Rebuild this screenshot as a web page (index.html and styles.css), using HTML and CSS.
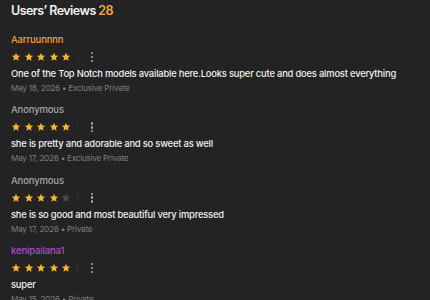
FILE: index.html
```html
<!DOCTYPE html>
<html lang="en">
<head>
    <meta charset="UTF-8">
    <meta name="viewport" content="width=device-width, initial-scale=1.0">
    <title>Users' Reviews</title>
    <link rel="stylesheet" href="styles.css">
</head>
<body>
    <div class="reviews">
        <h2 class="reviews-title">Users’ Reviews <span class="count">28</span></h2>

        <div class="review">
            <div class="review-name">Aarruunnnn</div>
            <div class="review-rating">
                <div class="stars">
                    <svg class="star on" viewBox="0 0 24 24"><path d="M12 2l2.9 6.6 7.1.6-5.4 4.7 1.6 7-6.2-3.7-6.2 3.7 1.6-7L2 9.2l7.1-.6z"/></svg>
                    <svg class="star on" viewBox="0 0 24 24"><path d="M12 2l2.9 6.6 7.1.6-5.4 4.7 1.6 7-6.2-3.7-6.2 3.7 1.6-7L2 9.2l7.1-.6z"/></svg>
                    <svg class="star on" viewBox="0 0 24 24"><path d="M12 2l2.9 6.6 7.1.6-5.4 4.7 1.6 7-6.2-3.7-6.2 3.7 1.6-7L2 9.2l7.1-.6z"/></svg>
                    <svg class="star on" viewBox="0 0 24 24"><path d="M12 2l2.9 6.6 7.1.6-5.4 4.7 1.6 7-6.2-3.7-6.2 3.7 1.6-7L2 9.2l7.1-.6z"/></svg>
                    <svg class="star on" viewBox="0 0 24 24"><path d="M12 2l2.9 6.6 7.1.6-5.4 4.7 1.6 7-6.2-3.7-6.2 3.7 1.6-7L2 9.2l7.1-.6z"/></svg>
                </div>
                <span class="divider"></span>
                <span class="more"><i></i><i></i><i></i></span>
            </div>
            <p class="review-text">One of the Top Notch models available here.Looks super cute and does almost everything</p>
            <div class="review-meta">May 18, 2026 • Exclusive Private</div>
        </div>

        <div class="review">
            <div class="review-name anon">Anonymous</div>
            <div class="review-rating">
                <div class="stars">
                    <svg class="star on" viewBox="0 0 24 24"><path d="M12 2l2.9 6.6 7.1.6-5.4 4.7 1.6 7-6.2-3.7-6.2 3.7 1.6-7L2 9.2l7.1-.6z"/></svg>
                    <svg class="star on" viewBox="0 0 24 24"><path d="M12 2l2.9 6.6 7.1.6-5.4 4.7 1.6 7-6.2-3.7-6.2 3.7 1.6-7L2 9.2l7.1-.6z"/></svg>
                    <svg class="star on" viewBox="0 0 24 24"><path d="M12 2l2.9 6.6 7.1.6-5.4 4.7 1.6 7-6.2-3.7-6.2 3.7 1.6-7L2 9.2l7.1-.6z"/></svg>
                    <svg class="star on" viewBox="0 0 24 24"><path d="M12 2l2.9 6.6 7.1.6-5.4 4.7 1.6 7-6.2-3.7-6.2 3.7 1.6-7L2 9.2l7.1-.6z"/></svg>
                    <svg class="star on" viewBox="0 0 24 24"><path d="M12 2l2.9 6.6 7.1.6-5.4 4.7 1.6 7-6.2-3.7-6.2 3.7 1.6-7L2 9.2l7.1-.6z"/></svg>
                </div>
                <span class="divider"></span>
                <span class="more"><i></i><i></i><i></i></span>
            </div>
            <p class="review-text">she is pretty and adorable and so sweet as well</p>
            <div class="review-meta">May 17, 2026 • Exclusive Private</div>
        </div>

        <div class="review">
            <div class="review-name anon">Anonymous</div>
            <div class="review-rating">
                <div class="stars">
                    <svg class="star on" viewBox="0 0 24 24"><path d="M12 2l2.9 6.6 7.1.6-5.4 4.7 1.6 7-6.2-3.7-6.2 3.7 1.6-7L2 9.2l7.1-.6z"/></svg>
                    <svg class="star on" viewBox="0 0 24 24"><path d="M12 2l2.9 6.6 7.1.6-5.4 4.7 1.6 7-6.2-3.7-6.2 3.7 1.6-7L2 9.2l7.1-.6z"/></svg>
                    <svg class="star on" viewBox="0 0 24 24"><path d="M12 2l2.9 6.6 7.1.6-5.4 4.7 1.6 7-6.2-3.7-6.2 3.7 1.6-7L2 9.2l7.1-.6z"/></svg>
                    <svg class="star on" viewBox="0 0 24 24"><path d="M12 2l2.9 6.6 7.1.6-5.4 4.7 1.6 7-6.2-3.7-6.2 3.7 1.6-7L2 9.2l7.1-.6z"/></svg>
                    <svg class="star" viewBox="0 0 24 24"><path d="M12 2l2.9 6.6 7.1.6-5.4 4.7 1.6 7-6.2-3.7-6.2 3.7 1.6-7L2 9.2l7.1-.6z"/></svg>
                </div>
                <span class="divider"></span>
                <span class="more"><i></i><i></i><i></i></span>
            </div>
            <p class="review-text">she is so good and most beautiful very impressed</p>
            <div class="review-meta">May 17, 2026 • Private</div>
        </div>

        <div class="review">
            <div class="review-name purple">kenipailana1</div>
            <div class="review-rating">
                <div class="stars">
                    <svg class="star on" viewBox="0 0 24 24"><path d="M12 2l2.9 6.6 7.1.6-5.4 4.7 1.6 7-6.2-3.7-6.2 3.7 1.6-7L2 9.2l7.1-.6z"/></svg>
                    <svg class="star on" viewBox="0 0 24 24"><path d="M12 2l2.9 6.6 7.1.6-5.4 4.7 1.6 7-6.2-3.7-6.2 3.7 1.6-7L2 9.2l7.1-.6z"/></svg>
                    <svg class="star on" viewBox="0 0 24 24"><path d="M12 2l2.9 6.6 7.1.6-5.4 4.7 1.6 7-6.2-3.7-6.2 3.7 1.6-7L2 9.2l7.1-.6z"/></svg>
                    <svg class="star on" viewBox="0 0 24 24"><path d="M12 2l2.9 6.6 7.1.6-5.4 4.7 1.6 7-6.2-3.7-6.2 3.7 1.6-7L2 9.2l7.1-.6z"/></svg>
                    <svg class="star on" viewBox="0 0 24 24"><path d="M12 2l2.9 6.6 7.1.6-5.4 4.7 1.6 7-6.2-3.7-6.2 3.7 1.6-7L2 9.2l7.1-.6z"/></svg>
                </div>
                <span class="divider"></span>
                <span class="more"><i></i><i></i><i></i></span>
            </div>
            <p class="review-text">super</p>
            <div class="review-meta">May 15, 2026 • Private</div>
        </div>
    </div>
</body>
</html>
```

FILE: styles.css
```css
body {
    font-family: 'Inter', 'Liberation Sans', sans-serif;
    margin: 0;
    background-color: #232323;
    color: #eeeeee;
}

.reviews {
    padding: 2px 11px 0;
}

.reviews-title {
    margin: 0 0 14px;
    font-size: 12.5px;
    font-weight: 600;
    line-height: 17px;
    letter-spacing: -0.55px;
    color: #f2f2f2;
}

.reviews-title .count {
    color: #f2ad3c;
}

.review {
    margin-bottom: 9.33px;
}

.review-name {
    font-size: 9.5px;
    font-weight: 500;
    line-height: 14px;
    letter-spacing: -0.15px;
    color: #eea23a;
}

.review-name.anon {
    color: #a3a3a3;
}

.review-name.purple {
    color: #b24ad6;
}

.review-rating {
    display: flex;
    align-items: center;
    height: 12px;
    margin-top: 4px;
}

.stars {
    display: flex;
    gap: 2.5px;
}

.star {
    width: 10px;
    height: 10px;
    fill: #4a4a4a;
}

.star.on {
    fill: #f4b530;
}

.divider {
    width: 1px;
    height: 7px;
    background-color: #333333;
    margin: 0 12.5px 0 6px;
}

.more {
    display: flex;
    flex-direction: column;
    gap: 1.5px;
}

.more i {
    width: 2.4px;
    height: 2.4px;
    border-radius: 50%;
    background-color: #a8a8a8;
}

.review-text {
    margin: 4px 0 0;
    font-size: 9.4px;
    font-weight: 500;
    line-height: 14px;
    letter-spacing: -0.2px;
    color: #f0f0f0;
}

.review-meta {
    margin-top: 1px;
    font-size: 8.2px;
    line-height: 12px;
    letter-spacing: -0.25px;
    color: #7d7d7d;
}
```
